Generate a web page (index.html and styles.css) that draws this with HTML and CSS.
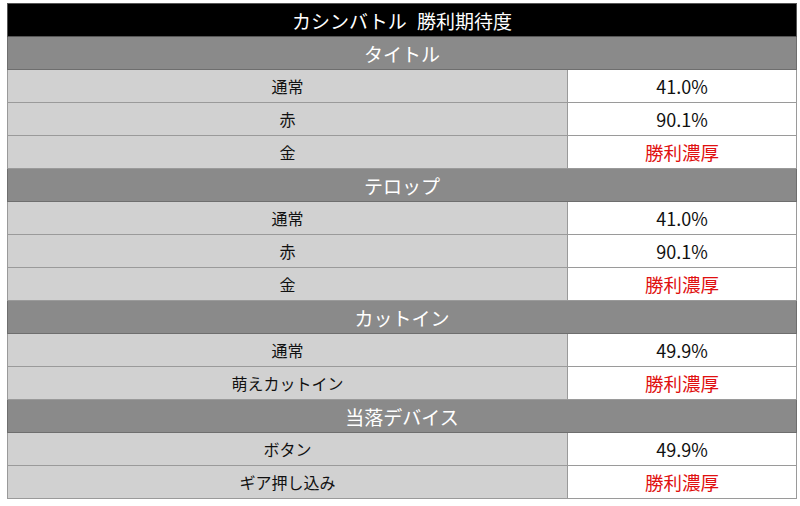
FILE: index.html
```html
<!DOCTYPE html>
<html lang="ja">
<head>
<meta charset="utf-8">
<link rel="stylesheet" href="styles.css">
</head>
<body>
<table class="tbl">
  <colgroup><col class="c1"><col class="c2"></colgroup>
  <tr><th class="title" colspan="2">カシンバトル 勝利期待度</th></tr>
  <tr><th class="sec" colspan="2">タイトル</th></tr>
  <tr><td class="lbl">通常</td><td class="val">41.0%</td></tr>
  <tr><td class="lbl">赤</td><td class="val">90.1%</td></tr>
  <tr><td class="lbl">金</td><td class="val red">勝利濃厚</td></tr>
  <tr><th class="sec" colspan="2">テロップ</th></tr>
  <tr><td class="lbl">通常</td><td class="val">41.0%</td></tr>
  <tr><td class="lbl">赤</td><td class="val">90.1%</td></tr>
  <tr><td class="lbl">金</td><td class="val red">勝利濃厚</td></tr>
  <tr><th class="sec" colspan="2">カットイン</th></tr>
  <tr><td class="lbl">通常</td><td class="val">49.9%</td></tr>
  <tr><td class="lbl">萌えカットイン</td><td class="val red">勝利濃厚</td></tr>
  <tr><th class="sec" colspan="2">当落デバイス</th></tr>
  <tr><td class="lbl">ボタン</td><td class="val">49.9%</td></tr>
  <tr><td class="lbl">ギア押し込み</td><td class="val red">勝利濃厚</td></tr>
</table>
</body>
</html>
```
FILE: styles.css
```css
html, body {
  margin: 0;
  padding: 0;
  background: #fff;
}
body {
  padding: 3px 4px 0 7px;
  font-family: "Noto Sans CJK JP", "Noto Sans", sans-serif;
}
.tbl {
  width: 789px;
  border-collapse: collapse;
  table-layout: fixed;
}
.c1 {
  width: 560px;
}
.c2 {
  width: 229px;
}
.tbl tr {
  height: 33px;
}
.tbl th, .tbl td {
  padding: 0;
  text-align: center;
  vertical-align: middle;
  border: 1px solid #9a9a9a;
  line-height: 1;
}
.title {
  background: #000;
  color: #fff;
  font-size: 19px;
  font-weight: normal;
  word-spacing: 6px;
  border-color: #555 !important;
}
.sec {
  background: #8a8a8a;
  color: #fff;
  font-size: 19px;
  font-weight: normal;
  border-color: #6e6e6e !important;
}
.lbl {
  background: #d1d1d1;
  color: #111;
  font-size: 16px;
}
.val {
  background: #fff;
  color: #111;
  font-size: 18px;
}
.red {
  color: #e01010;
  font-size: 18.5px;
}
```
